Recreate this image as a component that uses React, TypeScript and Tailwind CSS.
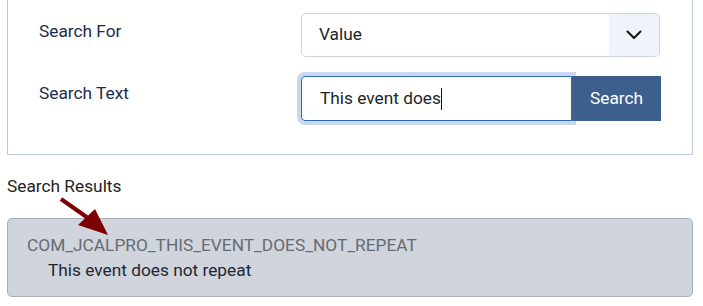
import React from "react";

export default function App() {
  return (
    <div
      className="relative w-[703px] h-[306px] overflow-hidden bg-white text-[17.3px]"
      style={{ fontFamily: "Roboto, 'Liberation Sans', sans-serif" }}
    >
      {/* Search panel */}
      <div className="ml-[7px] w-[686px] h-[155px] border-x border-b border-[#bccbe0] pt-[13px] pl-[31px]">
        <div className="flex items-start">
          <div className="w-[262px] mt-[6px] leading-[24px] text-[#1c2c4f]">Search For</div>
          <div className="flex w-[359px] h-[44px] rounded-[5px] border border-[#c9d3e1] overflow-hidden">
            <div className="flex-1 flex items-center pl-[17px] text-[#212529]">Value</div>
            <div className="w-[50px] flex items-center justify-center bg-[#eff3fa]">
              <svg width="16" height="10" viewBox="0 0 16 10" fill="none">
                <path d="M1.5 1.5 L8 8 L14.5 1.5" stroke="#111" strokeWidth="2" strokeLinecap="round" strokeLinejoin="round" />
              </svg>
            </div>
          </div>
        </div>
        <div className="flex items-start mt-[19px]">
          <div className="w-[262px] mt-[5px] leading-[24px] text-[#1c2c4f]">Search Text</div>
          <div className="flex w-[360px] h-[45px]">
            <div className="relative w-[271px] flex items-center pl-[18px] rounded-l-[4px] border border-[#2f69be] shadow-[0_0_0_4px_#c8d8ee] text-[#212529]">
              <span>This event does</span>
              <span className="inline-block w-px h-[22px] bg-[#111]" />
            </div>
            <div className="relative z-10 w-[89px] flex items-center justify-center bg-[#3c5f8d] text-white">
              Search
            </div>
          </div>
        </div>
      </div>

      {/* Results */}
      <div className="mt-[19px] ml-[7px] leading-[24px] text-[#222]">Search Results</div>
      <div className="mt-[20px] ml-[7px] w-[686px] h-[79px] rounded-[5px] border border-[#a5aebb] bg-[#cfd4dd] pt-[14px] leading-[25px]">
        <div className="pl-[19px] text-[#676b70]">COM_JCALPRO_THIS_EVENT_DOES_NOT_REPEAT</div>
        <div className="pl-[40px] text-[#1f2733]">This event does not repeat</div>
      </div>

      {/* Annotation arrow */}
      <svg className="absolute left-0 top-0 pointer-events-none" width="703" height="306">
        <line x1="61" y1="199" x2="88" y2="218" stroke="#7d0000" strokeWidth="4" />
        <polygon points="78,225 95,209 108,235" fill="#7d0000" />
      </svg>
    </div>
  );
}
